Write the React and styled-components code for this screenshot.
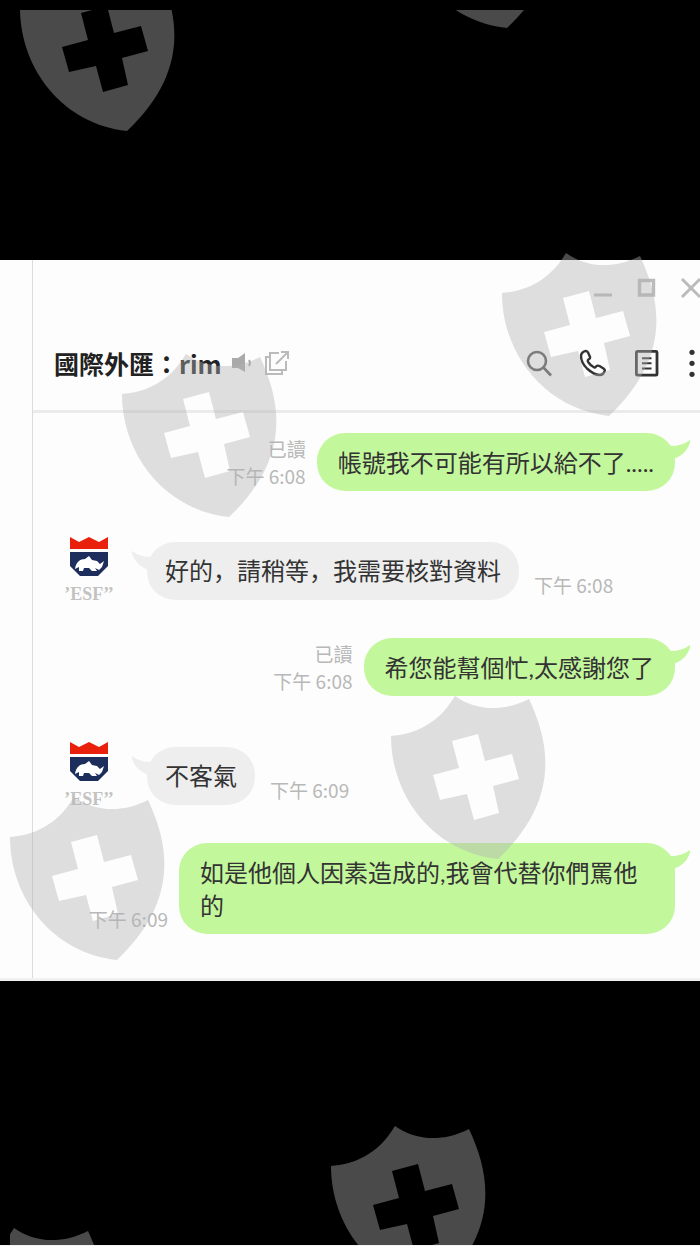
import React from 'react'
import styled, { createGlobalStyle, css } from 'styled-components'

const GlobalStyle = createGlobalStyle`
  * {
    box-sizing: border-box;
  }
  body {
    margin: 0;
    background: #000;
    font-family: 'Noto Sans CJK TC', 'Noto Sans', sans-serif;
  }
`

const Page = styled.div`
  position: relative;
  min-height: 100vh;
  padding: 260px 0 264px;
  border-bottom: 1px solid #f4f4f4;
  overflow: hidden;
`

const Window = styled.main`
  display: grid;
  grid-template-columns: 32px 1fr;
  background: #fdfdfd;
  border-bottom: 3px solid #f1f1f1;
`

const Chat = styled.section`
  min-width: 0;
  border-left: 1px solid #dcdcdc;
`

const Header = styled.header`
  border-bottom: 3px solid #ebebeb;
`

const WindowBar = styled.div`
  display: flex;
  justify-content: flex-end;
  gap: 22px;
  height: 56px;
  padding-top: 16px;
  overflow: hidden;
`

const TitleBar = styled.div`
  display: flex;
  align-items: center;
  justify-content: space-between;
  height: 94px;
  padding-left: 21px;
`

const Group = styled.div`
  display: flex;
  align-items: center;
  gap: ${props => props.$gap}px;
`

const Title = styled.h1`
  margin: 0;
  color: #222;
  font-size: 25px;
  font-weight: 700;
  line-height: 36px;
  white-space: nowrap;
`

const IconButton = styled.button`
  display: flex;
  flex: none;
  padding: 0;
  border: 0;
  background: none;
  color: ${props => props.$color || '#444'};

  svg {
    display: block;
    fill: none;
    stroke: currentColor;
  }
`

const Messages = styled.ol`
  display: flex;
  flex-direction: column;
  gap: 38px;
  margin: 0;
  padding: 20px 25px 44px 28px;
  list-style: none;
`

const Message = styled.li`
  display: flex;
  justify-content: ${props => (props.$mine ? 'flex-end' : 'flex-start')};
  margin-top: ${props => (props.$mine ? 0 : 13)}px;
`

const Avatar = styled.svg`
  flex: none;
  width: 56px;
  height: 70px;
  margin: -7px 30px -5px 0;
`

const Bubble = styled.p`
  position: relative;
  max-width: 496px;
  margin: 0;
  padding: 13px 21px 12px;
  border-radius: 28px;
  background: #c3f79c;
  color: #333;
  font-family: Lato, 'Noto Sans CJK JP', sans-serif;
  font-size: 24px;
  line-height: 33px;

  ${props =>
    !props.$mine &&
    css`
      padding: 12px 18px 13px;
      background: #eee;
    `}
`

const Tail = styled.svg`
  position: absolute;
  top: ${props => (props.$mine ? 7 : 9)}px;
  ${props => (props.$mine ? 'right: -16px' : 'left: -16px')};
  width: 40px;
  height: 24px;
  fill: ${props => (props.$mine ? '#c3f79c' : '#eee')};
  transform: ${props => (props.$mine ? 'none' : 'scaleX(-1)')};
`

const Meta = styled.div`
  flex: none;
  align-self: flex-end;
  margin: ${props => (props.$mine ? '0 11px 2px 0' : '0 0 2px 15px')};
  color: #b8b8b8;
  font-size: 19px;
  line-height: 27px;
  text-align: right;

  span,
  time {
    display: block;
  }
`

const Watermark = styled.svg`
  position: absolute;
  top: 10px;
  left: 10px;
  width: calc(100% - 10px);
  height: calc(100% - 10px);
  fill: #b2b2b2;
  fill-opacity: 0.416;
  pointer-events: none;
`

const messages = [
  { mine: true, text: '帳號我不可能有所以給不了.....', time: '下午 6:08', read: true },
  { text: '好的，請稍等，我需要核對資料', time: '下午 6:08' },
  { mine: true, text: '希您能幫個忙,太感謝您了', time: '下午 6:08', read: true },
  { text: '不客氣', time: '下午 6:09' },
  { mine: true, text: '如是他個人因素造成的,我會代替你們罵他的', time: '下午 6:09' },
]

const shields = [
  [10, -42],
  [390, -145],
  [112, 344],
  [492, 243],
  [381, 686],
  [0, 787],
  [321, 1116],
  [-60, 1218],
]

const SHIELD =
  'M0 40C22 38 46 30 64 0C84 14 110 17 138 3C161 52 167 106 107 163C42 156 0 100 0 40Z' +
  'M61 45L68 72L42 79L49 104L76 98L83 124L108 117L102 90L128 83L121 58L94 65L87 38Z'

const Logo = () => (
  <Avatar viewBox="0 0 56 70" role="img" aria-label="rim">
    <path d="M9 2L18 7L28 2L38 7L47 2V14H9Z" fill="#e8200c" />
    <path d="M9 17H47V31L37 41H19L9 31Z" fill="#1d2d5c" />
    <path
      d="M14 34C15 27 19 24 24 24L28 21L31 25L36 26L39 29L43 26L41 32L38 35L34 33L36 36H31L28 33H23L22 36H18L18 32Z"
      fill="#fff"
    />
    <text
      x="28"
      y="65"
      textAnchor="middle"
      fill="#c2c2c2"
      fontFamily="Liberation Serif, serif"
      fontWeight="700"
      fontSize="18"
    >
      ’ESF’’
    </text>
  </Avatar>
)

const App = () => (
  <Page>
    <GlobalStyle />
    <Window>
      <div />
      <Chat>
        <Header>
          <WindowBar>
            <IconButton aria-label="minimize" $color="#bbb">
              <svg width="24" height="24" strokeWidth="3">
                <path d="M6 19H24" />
              </svg>
            </IconButton>
            <IconButton aria-label="maximize" $color="#bbb">
              <svg width="24" height="24" strokeWidth="3.4">
                <path d="M5.5 4.5H19.5V19H5.5Z" />
              </svg>
            </IconButton>
            <IconButton aria-label="close" $color="#bbb">
              <svg width="20" height="24" strokeWidth="3">
                <path d="M2 3L20 21M20 3L2 21" />
              </svg>
            </IconButton>
          </WindowBar>
          <TitleBar>
            <Group $gap={10}>
              <Title>國際外匯：rim</Title>
              <Group $gap={10}>
                <IconButton aria-label="sound" $color="#aaa">
                  <svg width="22" height="26" strokeWidth="2">
                    <path d="M0 8H6L13 3V22L6 18H0Z" fill="currentColor" stroke="none" />
                    <path d="M17 10Q19 13 17 16" />
                  </svg>
                </IconButton>
                <IconButton aria-label="open in new window" $color="#bbb">
                  <svg width="26" height="26" strokeWidth="2">
                    <path d="M15 3H6V20H22V11M5 7H2V24H18V21M12 14L23 3M17 2H24V9" />
                  </svg>
                </IconButton>
              </Group>
            </Group>
            <Group $gap={26}>
              <IconButton aria-label="search" $color="#555">
                <svg width="28" height="28" strokeWidth="2.6">
                  <circle cx="12" cy="12" r="9" />
                  <path d="M18 18L26 26.5" />
                </svg>
              </IconButton>
              <IconButton aria-label="call" $color="#333">
                <svg width="28" height="28" strokeWidth="2.4" strokeLinejoin="round">
                  <path d="M2 7Q2 4 5 2.5Q8 1 9.3 4L11 8Q11.5 9.5 9.5 10.5Q8 11.5 9.5 13.5Q11.5 16.5 14.5 18Q16 19 17 17.5Q18.5 16 20.5 17L24.5 19.5Q26.5 21 25.5 22.5Q24 26 21 26Q15 26 8 19.5Q2 13.5 2 7Z" />
                </svg>
              </IconButton>
              <IconButton aria-label="notes" $color="#333">
                <svg width="28" height="28" strokeWidth="2.8">
                  <rect x="3.4" y="2.4" width="20.6" height="23.8" rx="1" />
                  <path d="M9 9.3H18.5M9 14.3H18.5M9 19.4H18.5" strokeWidth="2" />
                </svg>
              </IconButton>
              <IconButton aria-label="menu">
                <svg width="13" height="28">
                  <g fill="#333" stroke="none">
                    <circle cx="5" cy="3.3" r="2.6" />
                    <circle cx="5" cy="14.3" r="2.6" />
                    <circle cx="5" cy="25.3" r="2.6" />
                  </g>
                </svg>
              </IconButton>
            </Group>
          </TitleBar>
        </Header>
        <Messages>
          {messages.map(({ mine, text, time, read }, i) => {
            const meta = (
              <Meta $mine={mine}>
                {read && <span>已讀</span>}
                <time>{time}</time>
              </Meta>
            )
            return (
              <Message key={i} $mine={mine}>
                {mine ? meta : <Logo />}
                <Bubble $mine={mine}>
                  <Tail $mine={mine} viewBox="0 0 40 24">
                    <path d="M14 0L20 6Q31 6 39 0Q40 2 36 9Q32 15 25 18L16 20Z" />
                  </Tail>
                  {text}
                </Bubble>
                {!mine && meta}
              </Message>
            )
          })}
        </Messages>
      </Chat>
    </Window>
    <Watermark aria-hidden="true">
      {shields.map(([x, y]) => (
        <path key={`${x},${y}`} d={SHIELD} fillRule="evenodd" transform={`translate(${x} ${y})`} />
      ))}
    </Watermark>
  </Page>
)

export default App
